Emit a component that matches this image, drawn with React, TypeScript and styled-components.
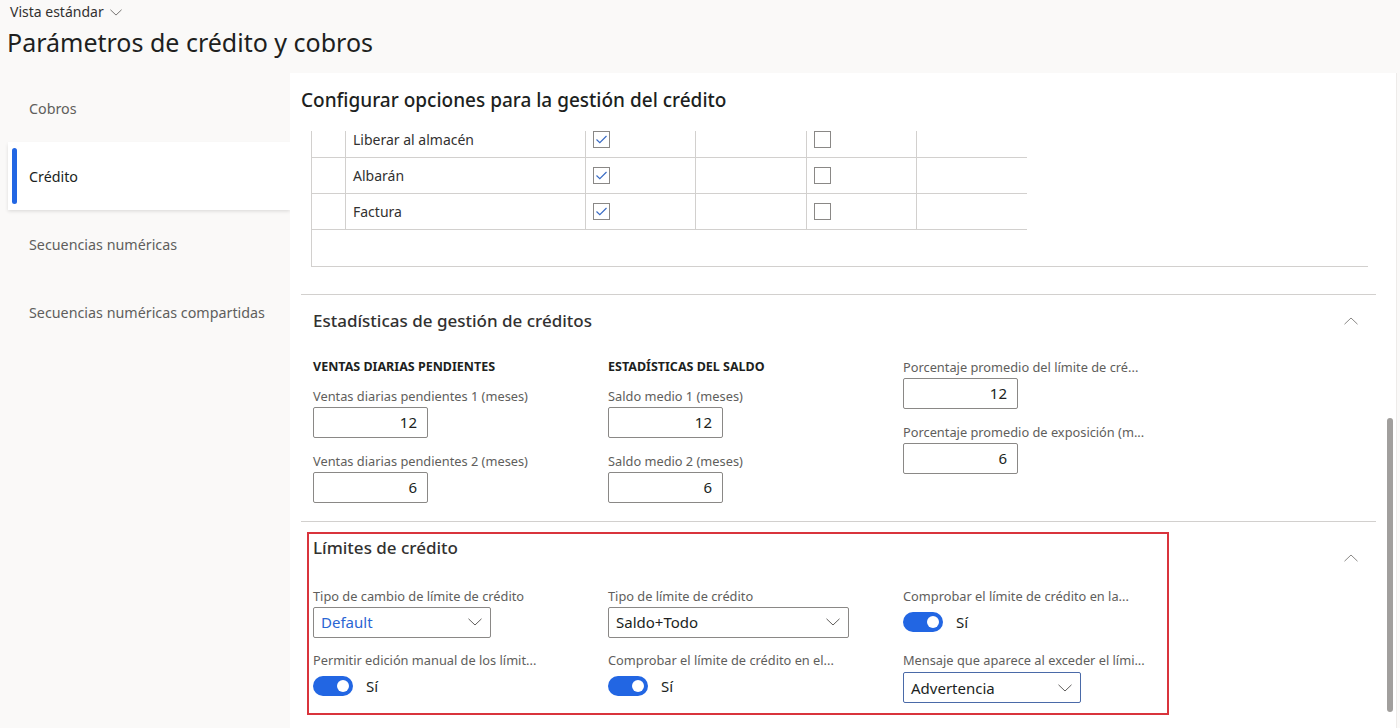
import React from 'react';
import styled, { createGlobalStyle } from 'styled-components';

const GlobalStyle = createGlobalStyle`
  html, body {
    margin: 0;
    padding: 0;
    height: 100%;
    overflow: hidden;
    background: #faf9f8;
  }
  body {
    font-family: "Segoe UI", "Noto Sans", "Open Sans", sans-serif;
    color: #323130;
  }
  * {
    box-sizing: border-box;
  }
`;

const Page = styled.div`
  width: 1400px;
  height: 728px;
  display: flex;
  flex-direction: column;
`;

const Header = styled.header`
  height: 73px;
  padding-left: 7px;
  flex-shrink: 0;
`;

const ViewSwitcher = styled.div`
  display: flex;
  align-items: center;
  gap: 6px;
  margin-left: 3px;
  padding-top: 2px;
  font-size: 14px;
  line-height: 20px;
  color: #323130;
`;

const Title = styled.h1`
  margin: 4px 0 0;
  font-size: 25px;
  line-height: 32px;
  font-weight: 400;
  color: #201f1e;
`;

const Body = styled.div`
  flex: 1;
  display: flex;
  min-height: 0;
`;

const Nav = styled.nav`
  width: 290px;
  flex-shrink: 0;
  padding-top: 1px;
  display: flex;
  flex-direction: column;
`;

const NavItem = styled.div<{ $active?: boolean }>`
  position: relative;
  height: 68px;
  display: flex;
  align-items: center;
  font-size: 14.3px;
  color: ${p => (p.$active ? '#201f1e' : '#605e5c')};
  padding-left: ${p => (p.$active ? '21px' : '29px')};
  margin-left: ${p => (p.$active ? '8px' : '0')};
  background: ${p => (p.$active ? '#ffffff' : 'transparent')};
  box-shadow: ${p => (p.$active ? '0 1.6px 3.6px rgba(0,0,0,0.12)' : 'none')};

  &::before {
    content: '';
    display: ${p => (p.$active ? 'block' : 'none')};
    position: absolute;
    left: 4px;
    top: 6px;
    bottom: 6px;
    width: 5px;
    border-radius: 3px;
    background: #2266e3;
  }
`;

const Main = styled.main`
  position: relative;
  flex: 1;
  background: #ffffff;
  display: flex;
  flex-direction: column;
  min-width: 0;
`;

const RightRail = styled.div`
  width: 4px;
  flex-shrink: 0;
  border-left: 1px solid #edebe9;
`;

const PanelHeading = styled.h2`
  margin: 0;
  height: 58px;
  flex-shrink: 0;
  padding: 14px 0 0 11px;
  font-size: 19px;
  line-height: 26px;
  font-weight: 500;
  color: #201f1e;
`;

const Viewport = styled.div`
  flex: 1;
  overflow: hidden;
`;

const ScrollContent = styled.div`
  margin-top: -9px;
  padding: 0 20px 0 11px;
`;

const TableFrame = styled.div`
  margin-left: 10px;
  width: 1057px;
  height: 145px;
  border-left: 1px solid #d2d0ce;
  border-bottom: 1px solid #d2d0ce;
`;

const TableRow = styled.div`
  display: grid;
  grid-template-columns: 34px 240px 110px 111px 110px 110px;
  width: 715px;
  height: 36px;
  border-bottom: 1px solid #d2d0ce;
`;

const Cell = styled.div<{ $last?: boolean }>`
  display: flex;
  align-items: center;
  padding-left: 7px;
  font-size: 14px;
  color: #323130;
  border-right: ${p => (p.$last ? 'none' : '1px solid #d2d0ce')};
`;

const CheckBox = styled.div`
  width: 17px;
  height: 17px;
  border: 1px solid #8a8886;
  display: flex;
  align-items: center;
  justify-content: center;
`;

const Section = styled.section`
  border-top: 1px solid #d2d0ce;
`;

const StatsSection = styled(Section)`
  margin-top: 27px;
  padding: 14px 18px 18px 12px;
`;

const SectionHeader = styled.div`
  display: flex;
  align-items: center;
  justify-content: space-between;
  height: 24px;
`;

const SectionTitle = styled.h3`
  margin: 0;
  font-size: 17px;
  line-height: 24px;
  font-weight: 500;
  color: #323130;
`;

const ThreeCols = styled.div`
  display: grid;
  grid-template-columns: 295px 295px 1fr;
`;

const StatsGrid = styled(ThreeCols)`
  margin-top: 25px;
`;

const Column = styled.div`
  display: flex;
  flex-direction: column;
  gap: 14px;
`;

const GroupTitle = styled.div`
  font-size: 12.5px;
  line-height: 18px;
  font-weight: 700;
  text-transform: uppercase;
  color: #201f1e;
  margin-bottom: -3px;
`;

const Field = styled.div`
  display: flex;
  flex-direction: column;
`;

const Label = styled.div`
  font-size: 12.8px;
  line-height: 18px;
  color: #605e5c;
  white-space: nowrap;
`;

const NumberBox = styled.div`
  margin-top: 2px;
  width: 115px;
  height: 31px;
  border: 1px solid #8a8886;
  border-radius: 2px;
  padding: 0 10px;
  font-size: 15px;
  line-height: 29px;
  text-align: right;
  color: #201f1e;
`;

const LimitsSection = styled(Section)`
  display: flex;
  align-items: flex-start;
  padding: 10px 18px 0 6px;
`;

const HighlightBox = styled.div`
  width: 862px;
  border: 2px solid #d9343c;
  padding: 2px 0 11px 4px;
`;

const LimitsGrid = styled(ThreeCols)`
  margin-top: 27px;
  row-gap: 13px;
`;

const ControlRow = styled.div<{ $drop?: number }>`
  height: 32px;
  margin-top: 1px;
  display: flex;
  align-items: center;
  padding-top: ${p => p.$drop ?? 0}px;
`;

const Select = styled.div<{ $width: number; $focused?: boolean }>`
  width: ${p => p.$width}px;
  height: 31px;
  border: 1px solid ${p => (p.$focused ? '#4a6aa8' : '#8a8886')};
  border-radius: 2px;
  display: flex;
  align-items: center;
  justify-content: space-between;
  padding: 0 8px 0 7px;
  font-size: 15px;
`;

const SelectValue = styled.span<{ $link?: boolean }>`
  color: ${p => (p.$link ? '#2a65d3' : '#201f1e')};
`;

const Toggle = styled.div`
  position: relative;
  width: 40px;
  height: 20px;
  border-radius: 10px;
  background: #2266e3;

  &::after {
    content: '';
    position: absolute;
    right: 4px;
    top: 4px;
    width: 12px;
    height: 12px;
    border-radius: 50%;
    background: #ffffff;
  }
`;

const ToggleText = styled.span`
  margin-left: 13px;
  font-size: 15px;
  color: #201f1e;
`;

const CollapseButton = styled.div<{ $offset?: number }>`
  display: flex;
  align-items: center;
  height: 24px;
  margin-left: auto;
  margin-top: ${p => p.$offset ?? 0}px;
`;

const ScrollThumb = styled.div`
  position: absolute;
  right: 3px;
  top: 345px;
  width: 6px;
  height: 294px;
  border-radius: 3px;
  background: #a19f9d;
`;

const ChevronDown = ({ size = 14 }: { size?: number }) => (
  <svg width={size} height={size / 2 + 1} viewBox="0 0 14 8" fill="none">
    <path d="M0.5 0.8 L7 7 L13.5 0.8" stroke="#605e5c" strokeWidth="1" />
  </svg>
);

const ChevronUp = () => (
  <svg width="14" height="8" viewBox="0 0 14 8" fill="none">
    <path d="M0.5 7.2 L7 1 L13.5 7.2" stroke="#8a8886" strokeWidth="1" />
  </svg>
);

const CheckMark = () => (
  <svg width="13" height="11" viewBox="0 0 13 11" fill="none">
    <path d="M1.5 5.5 L4.8 8.6 L11.5 2" stroke="#3b6cc4" strokeWidth="1.2" />
  </svg>
);

interface RowData {
  name: string;
  first: boolean;
  second: boolean;
}

const rows: RowData[] = [
  { name: 'Liberar al almacén', first: true, second: false },
  { name: 'Albarán', first: true, second: false },
  { name: 'Factura', first: true, second: false },
];

const navItems = ['Cobros', 'Crédito', 'Secuencias numéricas', 'Secuencias numéricas compartidas'];

const App = () => {
  return (
    <Page>
      <GlobalStyle />
      <Header>
        <ViewSwitcher>
          Vista estándar
          <ChevronDown size={12} />
        </ViewSwitcher>
        <Title>Parámetros de crédito y cobros</Title>
      </Header>
      <Body>
        <Nav>
          {navItems.map(item => (
            <NavItem key={item} $active={item === 'Crédito'}>
              {item}
            </NavItem>
          ))}
        </Nav>
        <Main>
          <PanelHeading>Configurar opciones para la gestión del crédito</PanelHeading>
          <Viewport>
            <ScrollContent>
              <TableFrame>
                {rows.map(row => (
                  <TableRow key={row.name}>
                    <Cell />
                    <Cell>{row.name}</Cell>
                    <Cell>
                      <CheckBox>{row.first && <CheckMark />}</CheckBox>
                    </Cell>
                    <Cell />
                    <Cell>
                      <CheckBox>{row.second && <CheckMark />}</CheckBox>
                    </Cell>
                    <Cell $last />
                  </TableRow>
                ))}
              </TableFrame>

              <StatsSection>
                <SectionHeader>
                  <SectionTitle>Estadísticas de gestión de créditos</SectionTitle>
                  <ChevronUp />
                </SectionHeader>
                <StatsGrid>
                  <Column>
                    <GroupTitle>Ventas diarias pendientes</GroupTitle>
                    <Field>
                      <Label>Ventas diarias pendientes 1 (meses)</Label>
                      <NumberBox>12</NumberBox>
                    </Field>
                    <Field>
                      <Label>Ventas diarias pendientes 2 (meses)</Label>
                      <NumberBox>6</NumberBox>
                    </Field>
                  </Column>
                  <Column>
                    <GroupTitle>Estadísticas del saldo</GroupTitle>
                    <Field>
                      <Label>Saldo medio 1 (meses)</Label>
                      <NumberBox>12</NumberBox>
                    </Field>
                    <Field>
                      <Label>Saldo medio 2 (meses)</Label>
                      <NumberBox>6</NumberBox>
                    </Field>
                  </Column>
                  <Column>
                    <Field>
                      <Label>Porcentaje promedio del límite de cré...</Label>
                      <NumberBox>12</NumberBox>
                    </Field>
                    <Field>
                      <Label>Porcentaje promedio de exposición (m...</Label>
                      <NumberBox>6</NumberBox>
                    </Field>
                  </Column>
                </StatsGrid>
              </StatsSection>

              <LimitsSection>
                <HighlightBox>
                  <SectionTitle>Límites de crédito</SectionTitle>
                  <LimitsGrid>
                    <Field>
                      <Label>Tipo de cambio de límite de crédito</Label>
                      <ControlRow>
                        <Select $width={178}>
                          <SelectValue $link>Default</SelectValue>
                          <ChevronDown />
                        </Select>
                      </ControlRow>
                    </Field>
                    <Field>
                      <Label>Tipo de límite de crédito</Label>
                      <ControlRow>
                        <Select $width={241}>
                          <SelectValue>Saldo+Todo</SelectValue>
                          <ChevronDown />
                        </Select>
                      </ControlRow>
                    </Field>
                    <Field>
                      <Label>Comprobar el límite de crédito en la...</Label>
                      <ControlRow>
                        <Toggle />
                        <ToggleText>Sí</ToggleText>
                      </ControlRow>
                    </Field>
                    <Field>
                      <Label>Permitir edición manual de los límit...</Label>
                      <ControlRow>
                        <Toggle />
                        <ToggleText>Sí</ToggleText>
                      </ControlRow>
                    </Field>
                    <Field>
                      <Label>Comprobar el límite de crédito en el...</Label>
                      <ControlRow>
                        <Toggle />
                        <ToggleText>Sí</ToggleText>
                      </ControlRow>
                    </Field>
                    <Field>
                      <Label>Mensaje que aparece al exceder el lími...</Label>
                      <ControlRow $drop={3}>
                        <Select $width={178} $focused>
                          <SelectValue>Advertencia</SelectValue>
                          <ChevronDown />
                        </Select>
                      </ControlRow>
                    </Field>
                  </LimitsGrid>
                </HighlightBox>
                <CollapseButton $offset={14}>
                  <ChevronUp />
                </CollapseButton>
              </LimitsSection>
            </ScrollContent>
          </Viewport>
          <ScrollThumb />
        </Main>
        <RightRail />
      </Body>
    </Page>
  );
};

export default App;
